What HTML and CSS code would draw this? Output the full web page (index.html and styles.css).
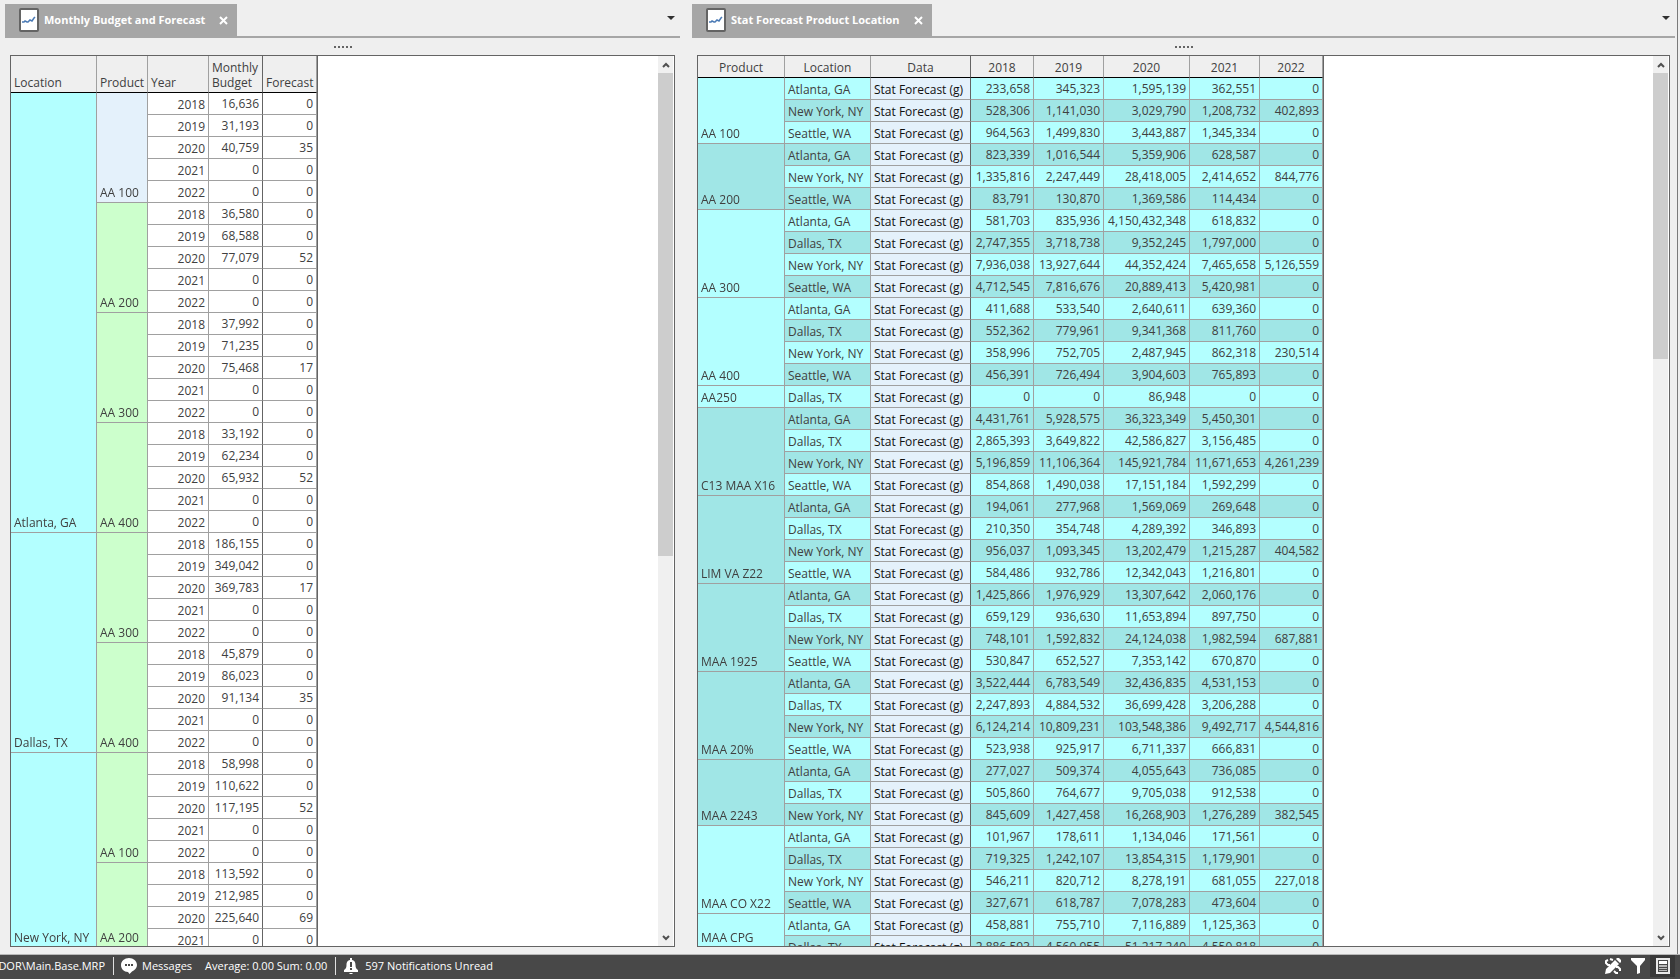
FILE: index.html
```html
<!DOCTYPE html>
<html lang="en">
<head>
<meta charset="utf-8">
<title>Monthly Budget and Forecast</title>
<link rel="stylesheet" href="styles.css">
</head>
<body>
<svg class="defs" aria-hidden="true">
  <symbol id="sheet" viewBox="0 0 20 24">
    <rect x="1" y="1" width="18" height="22" rx="1" fill="#fff" stroke="#646464" stroke-width="2"/>
    <path d="M3 14h2l1-1 2 1h1l2-2 2 1 2-3 1-1" fill="none" stroke="#4a7ab5" stroke-width="1.500"/>
  </symbol>
  <symbol id="up" viewBox="0 0 8 6"><path d="M1 5l3-3 3 3" fill="none" stroke="#505050" stroke-width="2"/></symbol>
  <symbol id="down" viewBox="0 0 8 6"><path d="M1 1l3 3 3-3" fill="none" stroke="#505050" stroke-width="2"/></symbol>
</svg>
<main class="workspace">
  <section class="pane">
    <header class="tabs">
      <div class="tab"><svg class="sheet"><use href="#sheet"/></svg><span class="tab-title">Monthly Budget and Forecast</span><button class="close" aria-label="Close"><svg viewBox="0 0 9 9"><path d="M1 1l7 7M8 1l-7 7"/></svg></button></div>
      <button class="more" aria-label="Tab list"></button>
    </header>
    <div class="grip"><i></i><i></i><i></i><i></i><i></i></div>
    <div class="frame">
      <div class="sheet-view">
        <table class="grid budget">
          <colgroup><col class="w86"><col class="w51"><col class="w61"><col class="w54"><col class="w54"></colgroup>
          <thead><tr><th>Location</th><th>Product</th><th>Year</th><th class="edge two-line">Monthly Budget</th><th>Forecast</th></tr></thead>
          <tbody id="budget-rows"></tbody>
        </table>
      </div>
      <div class="scroll"><button aria-label="Scroll up"><svg><use href="#up"/></svg></button><div class="track"><div class="thumb thumb-budget"></div></div><button aria-label="Scroll down"><svg><use href="#down"/></svg></button></div>
    </div>
  </section>
  <section class="pane">
    <header class="tabs">
      <div class="tab"><svg class="sheet"><use href="#sheet"/></svg><span class="tab-title">Stat Forecast Product Location</span><button class="close" aria-label="Close"><svg viewBox="0 0 9 9"><path d="M1 1l7 7M8 1l-7 7"/></svg></button></div>
      <button class="more" aria-label="Tab list"></button>
    </header>
    <div class="grip"><i></i><i></i><i></i><i></i><i></i></div>
    <div class="frame">
      <div class="sheet-view">
        <table class="grid stat">
          <colgroup><col class="w87"><col class="w86"><col class="w100"><col class="w63"><col class="w70"><col class="w86"><col class="w70"><col class="w63"></colgroup>
          <thead><tr><th>Product</th><th>Location</th><th class="edge">Data</th><th>2018</th><th>2019</th><th>2020</th><th>2021</th><th>2022</th></tr></thead>
          <tbody id="stat-rows"></tbody>
        </table>
      </div>
      <div class="scroll"><button aria-label="Scroll up"><svg><use href="#up"/></svg></button><div class="track"><div class="thumb thumb-stat"></div></div><button aria-label="Scroll down"><svg><use href="#down"/></svg></button></div>
    </div>
  </section>
</main>
<footer class="status">
  <div class="path"><span>DOR\Main.Base.MRP</span></div>
  <div class="messages">
    <svg class="i16" viewBox="0 0 16 16"><path d="M8 0c4.400 0 8 3 8 7 0 3-2 5-5 6.500L8.500 16 7 14C3 14 0 11 0 7s3.600-7 8-7z" fill="#fff"/><path d="M4 7h2M7 7h2M10 7h2" stroke="#484848" stroke-width="2"/></svg>
    <span>Messages</span>
  </div>
  <div class="sums">Average: 0.00 Sum: 0.00</div>
  <div class="notes">
    <svg class="i16" viewBox="0 0 16 16"><path d="M7 0h2v2c3 .6 3.500 3 3.500 5 0 3 1 4 2.500 5v2H1v-2c1.500-1 2.500-2 2.500-5 0-2 .5-4.400 3.500-5zM6.500 15h3v1h-3z" fill="#fff"/><path d="M8 4v5M8 10v2" stroke="#484848" stroke-width="2"/></svg>
    <span>597 Notifications Unread</span>
  </div>
  <div class="tools">
    <button aria-label="Edit tools"><svg class="i16" viewBox="0 0 16 16"><path d="M0 16l1-5L10 2l4 4-9 9zM11 1l1-1h2l2 2v2l-1 1z" fill="#fff"/><path d="M8 2L5 1M3 2L1 3v2l2 2 2 0M11 9l2 0 2 2v2M13 15h-2l-2-2" fill="none" stroke="#fff" stroke-width="2"/></svg></button>
    <button aria-label="Filter"><svg class="i16" viewBox="0 0 16 16"><path d="M1 0h14v2L10 8v7l-3 1V8L1 2z" fill="#fff"/></svg></button>
    <button class="on" aria-label="List"><svg class="i16" viewBox="0 0 16 16"><path d="M1 0h14v16H1z" fill="#e8e8e8"/><path d="M3 2h10v12H3z" fill="#484848"/><path d="M4 3h8v3H4z" fill="#fff"/><path d="M4 7h8v2H4zM4 10h8v1H4zM4 12h8v1H4z" fill="#b8b8b8"/></svg></button>
  </div>
</footer>
<script src="grids.js"></script>
</body>
</html>
```
FILE: styles.css
```css
* { box-sizing: border-box; }
body {
  margin: 0;
  height: 100vh;
  display: flex;
  flex-direction: column;
  overflow: hidden;
  background: #efefef;
  color: #404040;
  font: 12px/16px "Open Sans", "Noto Sans", sans-serif;
}
button { padding: 0; border: 0; background: none; display: grid; place-items: center; }
.defs { display: none; }
.workspace {
  flex: 1;
  min-height: 0;
  display: grid;
  grid-template-columns: 675fr 983fr;
  gap: 12px;
  margin-right: 2px;
  padding: 4px 2px 7px 5px;
  border-right: 1px solid #7a7a7a;
}
.pane { display: flex; flex-direction: column; min-width: 0; min-height: 0; }
.tabs {
  display: flex;
  justify-content: space-between;
  height: 34px;
  border-bottom: 2px solid #a6a6a6;
}
.tab {
  height: 34px;
  display: flex;
  align-items: center;
  padding: 0 9px 2px 14px;
  background: #a6a6a6;
  color: #fff;
}
.sheet { width: 20px; height: 24px; margin-right: 5px; }
.tab-title { font-size: 11px; font-weight: 700; white-space: nowrap; }
.close { width: 9px; height: 9px; margin-left: 14px; }
.close svg { width: 9px; height: 9px; fill: none; stroke: #fff; stroke-width: 2; }
.more { width: 13px; height: 28px; margin-right: 3px; }
.more::before { content: ""; border: 4px solid transparent; border-top-color: #303030; border-bottom: 0; }
.grip { height: 17px; display: flex; justify-content: center; align-items: center; gap: 2px; }
.grip i { width: 2px; height: 2px; background: #646464; }
.frame {
  flex: 1;
  min-height: 0;
  display: flex;
  margin: 0 5px;
  border: 1px solid #646464;
  background: #fff;
}
.sheet-view { flex: 1; min-width: 0; overflow: hidden; }
.scroll { width: 16px; border-right: 1px solid #fff; background: #f0f0f0; display: flex; flex-direction: column; }
.scroll button { width: 15px; height: 17px; }
.scroll button svg { width: 8px; height: 6px; }
.track { flex: 1; }
.thumb { background: #cdcdcd; }
.thumb-budget { height: 56.4%; }
.thumb-stat { height: 33.4%; }

.grid { table-layout: fixed; width: 0; border-collapse: separate; border-spacing: 0; border-right: 1px solid #646464; }
.w51 { width: 51px; }
.w54 { width: 54px; }
.w61 { width: 61px; }
.w63 { width: 63px; }
.w70 { width: 70px; }
.w86 { width: 86px; }
.w87 { width: 87px; }
.w100 { width: 100px; }
.grid th, .grid td {
  height: 22px;
  padding: 4px 3px 1px;
  border-right: 1px solid #a0a0a0;
  border-bottom: 1px solid #a0a0a0;
  font-weight: 400;
  text-align: left;
  vertical-align: bottom;
  white-space: nowrap;
}
.grid th { background: #efefef; border-bottom-color: #000; }
.grid .edge { border-right-color: #646464; }
.grid .two-line { white-space: normal; line-height: 15px; padding-bottom: 2px; }
.budget th { height: 37px; }
.stat th { text-align: center; }
.grid .num { text-align: right; padding: 3px 3px 2px; }
.grid .year { text-align: right; }
.label { position: sticky; bottom: 0; display: block; }
.cyan { background: #b3ffff; }
.teal { background: #a0e6e6; }
.green { background: #ccffcc; }
.blue { background: #e4f1fb; }
.data { color: #101010; }

.status {
  height: 25px;
  display: flex;
  align-items: center;
  padding-bottom: 2px;
  border-top: 1px solid #b8b8b8;
  background: #484848;
  color: #fff;
  font-size: 11px;
}
.status > div { display: flex; align-items: center; height: 18px; white-space: nowrap; }
.i16 { width: 16px; height: 16px; }
.status .path { width: 114px; justify-content: flex-end; padding-right: 8px; border-right: 1px solid #e0e0e0; overflow: hidden; }
.messages { gap: 5px; padding-left: 7px; }
.sums { padding: 0 8px 0 13px; border-right: 1px solid #e0e0e0; }
.notes { gap: 6px; padding-left: 7px; }
.status .tools { margin-left: auto; padding-right: 5px; }
.tools button { width: 25px; height: 22px; }
.tools .on { background: #383838; }
```
FILE: grids.js
```js
const budget = [
  ["Atlanta, GA", [
    ["AA 100", "blue", "16,636 31,193 40,759 0 0", "35"],
    ["AA 200", "green", "36,580 68,588 77,079 0 0", "52"],
    ["AA 300", "green", "37,992 71,235 75,468 0 0", "17"],
    ["AA 400", "green", "33,192 62,234 65,932 0 0", "52"]]],
  ["Dallas, TX", [
    ["AA 300", "green", "186,155 349,042 369,783 0 0", "17"],
    ["AA 400", "green", "45,879 86,023 91,134 0 0", "35"]]],
  ["New York, NY", [
    ["AA 100", "green", "58,998 110,622 117,195 0 0", "52"],
    ["AA 200", "green", "113,592 212,985 225,640 0", "69"]]]
];

const sites = { A: "Atlanta, GA", D: "Dallas, TX", N: "New York, NY", S: "Seattle, WA" };
const stat = [
  ["AA 100", [
    "A 233,658 345,323 1,595,139 362,551 0",
    "N 528,306 1,141,030 3,029,790 1,208,732 402,893",
    "S 964,563 1,499,830 3,443,887 1,345,334 0"]],
  ["AA 200", [
    "A 823,339 1,016,544 5,359,906 628,587 0",
    "N 1,335,816 2,247,449 28,418,005 2,414,652 844,776",
    "S 83,791 130,870 1,369,586 114,434 0"]],
  ["AA 300", [
    "A 581,703 835,936 4,150,432,348 618,832 0",
    "D 2,747,355 3,718,738 9,352,245 1,797,000 0",
    "N 7,936,038 13,927,644 44,352,424 7,465,658 5,126,559",
    "S 4,712,545 7,816,676 20,889,413 5,420,981 0"]],
  ["AA 400", [
    "A 411,688 533,540 2,640,611 639,360 0",
    "D 552,362 779,961 9,341,368 811,760 0",
    "N 358,996 752,705 2,487,945 862,318 230,514",
    "S 456,391 726,494 3,904,603 765,893 0"]],
  ["AA250", [
    "D 0 0 86,948 0 0"]],
  ["C13 MAA X16", [
    "A 4,431,761 5,928,575 36,323,349 5,450,301 0",
    "D 2,865,393 3,649,822 42,586,827 3,156,485 0",
    "N 5,196,859 11,106,364 145,921,784 11,671,653 4,261,239",
    "S 854,868 1,490,038 17,151,184 1,592,299 0"]],
  ["LIM VA Z22", [
    "A 194,061 277,968 1,569,069 269,648 0",
    "D 210,350 354,748 4,289,392 346,893 0",
    "N 956,037 1,093,345 13,202,479 1,215,287 404,582",
    "S 584,486 932,786 12,342,043 1,216,801 0"]],
  ["MAA 1925", [
    "A 1,425,866 1,976,929 13,307,642 2,060,176 0",
    "D 659,129 936,630 11,653,894 897,750 0",
    "N 748,101 1,592,832 24,124,038 1,982,594 687,881",
    "S 530,847 652,527 7,353,142 670,870 0"]],
  ["MAA 20%", [
    "A 3,522,444 6,783,549 32,436,835 4,531,153 0",
    "D 2,247,893 4,884,532 36,699,428 3,206,288 0",
    "N 6,124,214 10,809,231 103,548,386 9,492,717 4,544,816",
    "S 523,938 925,917 6,711,337 666,831 0"]],
  ["MAA 2243", [
    "A 277,027 509,374 4,055,643 736,085 0",
    "D 505,860 764,677 9,705,038 912,538 0",
    "N 845,609 1,427,458 16,268,903 1,276,289 382,545"]],
  ["MAA CO X22", [
    "A 101,967 178,611 1,134,046 171,561 0",
    "D 719,325 1,242,107 13,854,315 1,179,901 0",
    "N 546,211 820,712 8,278,191 681,055 227,018",
    "S 327,671 618,787 7,078,283 473,604 0"]],
  ["MAA CPG", [
    "A 458,881 755,710 7,116,889 1,125,363 0",
    "D 2,886,593 4,560,955 51,217,240 4,550,818 0"]]
];

const group = (text, span, tone) =>
  `<td class="${tone}" rowspan="${span}"><span class="label">${text}</span></td>`;

let rows = "";
for (const [place, products] of budget) {
  const years = products.map(([, , amounts]) => amounts.split(" "));
  products.forEach(([product, tone, , forecast], p) => {
    years[p].forEach((amount, y) => {
      rows += "<tr>";
      if (p + y === 0) rows += group(place, years.flat().length, "cyan");
      if (y === 0) rows += group(product, years[p].length, tone);
      rows += `<td class="year">${2018 + y}</td><td class="num edge">${amount}</td><td class="num">${y === 2 ? forecast : 0}</td></tr>`;
    });
  });
}
document.getElementById("budget-rows").innerHTML = rows;

rows = "";
let line = 0;
for (const [product, entries] of stat) {
  entries.forEach((entry, i) => {
    const tone = line++ % 2 ? "teal" : "cyan";
    const [site, ...values] = entry.split(" ");
    rows += "<tr>";
    if (i === 0) rows += group(product, entries.length, tone);
    rows += `<td class="${tone}">${sites[site]}</td><td class="blue data edge">Stat Forecast (g)</td>`;
    rows += values.map(v => `<td class="num ${tone}">${v}</td>`).join("") + "</tr>";
  });
}
document.getElementById("stat-rows").innerHTML = rows;
```
